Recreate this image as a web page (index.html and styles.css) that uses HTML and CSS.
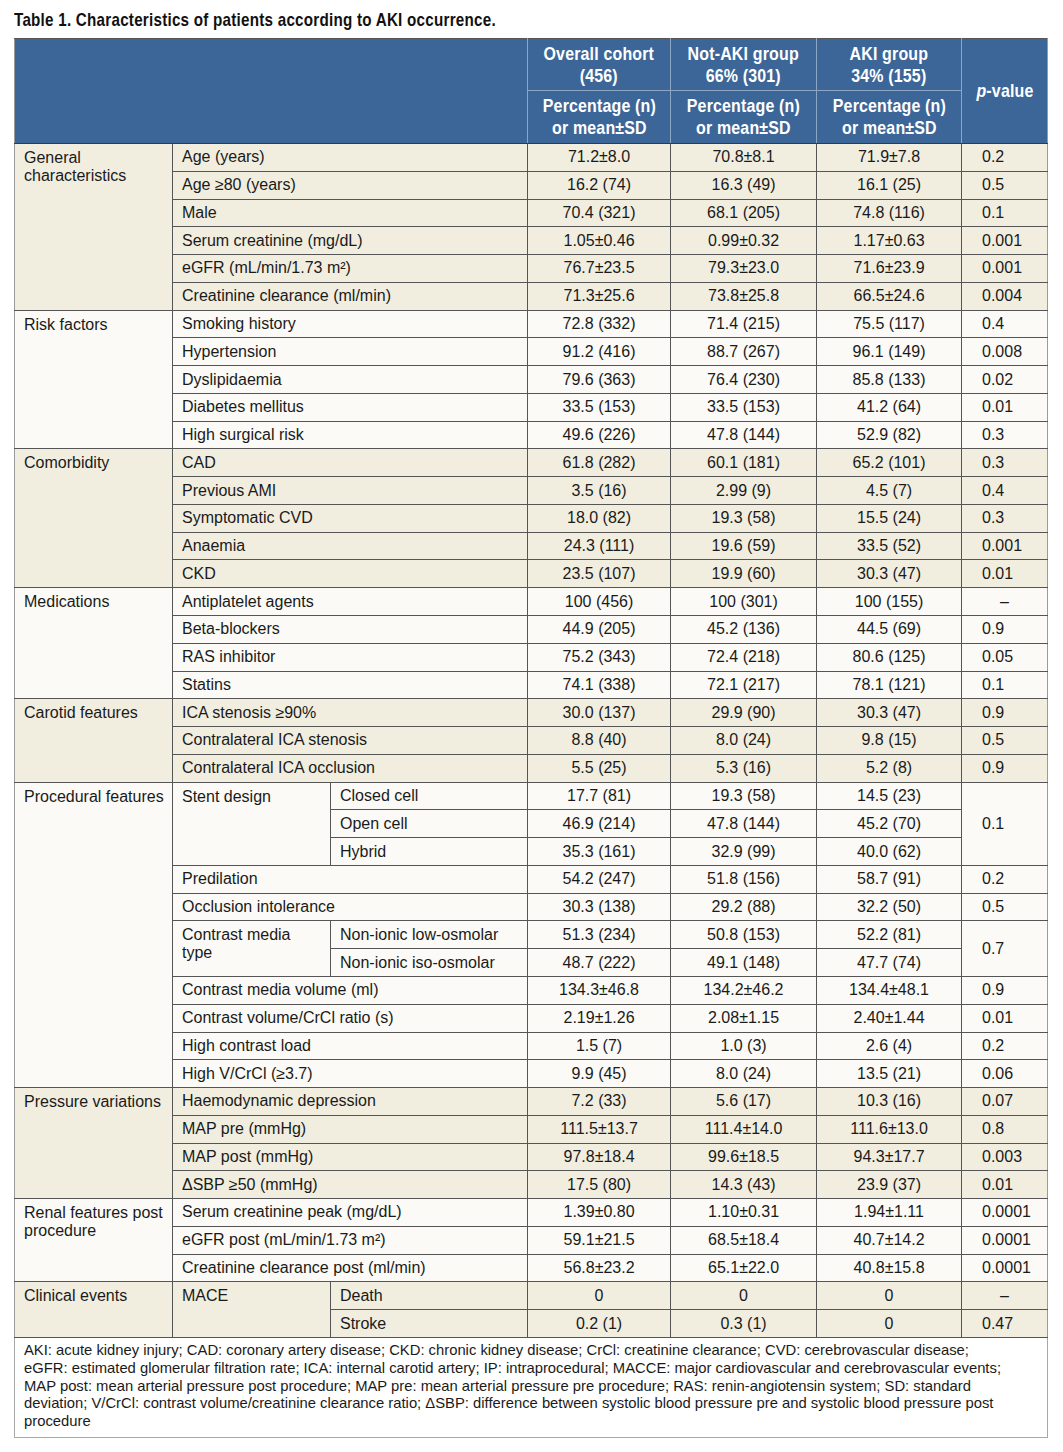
FILE: index.html
```html
<!DOCTYPE html>
<html lang="en">
<head>
<meta charset="utf-8">
<title>Table 1</title>
<link rel="stylesheet" href="styles.css">
</head>
<body>
<div class="page">
  <h1 class="caption"><span class="cond">Table 1. Characteristics of patients according to AKI occurrence.</span></h1>
  <table class="data">
    <colgroup>
      <col class="w-group">
      <col class="w-sub1">
      <col class="w-sub2">
      <col class="w-num1">
      <col class="w-num2">
      <col class="w-num3">
      <col class="w-p">
    </colgroup>
    <thead>
      <tr class="h1">
        <th colspan="3" rowspan="2" class="blank"></th>
        <th><span class="cond">Overall cohort<br>(456)</span></th>
        <th><span class="cond">Not-AKI group<br>66% (301)</span></th>
        <th><span class="cond">AKI group<br>34% (155)</span></th>
        <th rowspan="2" class="pv"><span class="cond"><i>p</i>-value</span></th>
      </tr>
      <tr class="h2">
        <th><span class="cond">Percentage (n)<br>or mean±SD</span></th>
        <th><span class="cond">Percentage (n)<br>or mean±SD</span></th>
        <th><span class="cond">Percentage (n)<br>or mean±SD</span></th>
      </tr>
    </thead>

    <tbody class="band">
      <tr><td rowspan="6" class="grp">General characteristics</td><td colspan="2" class="lbl">Age (years)</td><td class="num">71.2±8.0</td><td class="num">70.8±8.1</td><td class="num">71.9±7.8</td><td class="p">0.2</td></tr>
      <tr><td colspan="2" class="lbl">Age ≥80 (years)</td><td class="num">16.2 (74)</td><td class="num">16.3 (49)</td><td class="num">16.1 (25)</td><td class="p">0.5</td></tr>
      <tr><td colspan="2" class="lbl">Male</td><td class="num">70.4 (321)</td><td class="num">68.1 (205)</td><td class="num">74.8 (116)</td><td class="p">0.1</td></tr>
      <tr><td colspan="2" class="lbl">Serum creatinine (mg/dL)</td><td class="num">1.05±0.46</td><td class="num">0.99±0.32</td><td class="num">1.17±0.63</td><td class="p">0.001</td></tr>
      <tr><td colspan="2" class="lbl">eGFR (mL/min/1.73 m²)</td><td class="num">76.7±23.5</td><td class="num">79.3±23.0</td><td class="num">71.6±23.9</td><td class="p">0.001</td></tr>
      <tr><td colspan="2" class="lbl">Creatinine clearance (ml/min)</td><td class="num">71.3±25.6</td><td class="num">73.8±25.8</td><td class="num">66.5±24.6</td><td class="p">0.004</td></tr>
    </tbody>

    <tbody class="plain">
      <tr><td rowspan="5" class="grp">Risk factors</td><td colspan="2" class="lbl">Smoking history</td><td class="num">72.8 (332)</td><td class="num">71.4 (215)</td><td class="num">75.5 (117)</td><td class="p">0.4</td></tr>
      <tr><td colspan="2" class="lbl">Hypertension</td><td class="num">91.2 (416)</td><td class="num">88.7 (267)</td><td class="num">96.1 (149)</td><td class="p">0.008</td></tr>
      <tr><td colspan="2" class="lbl">Dyslipidaemia</td><td class="num">79.6 (363)</td><td class="num">76.4 (230)</td><td class="num">85.8 (133)</td><td class="p">0.02</td></tr>
      <tr><td colspan="2" class="lbl">Diabetes mellitus</td><td class="num">33.5 (153)</td><td class="num">33.5 (153)</td><td class="num">41.2 (64)</td><td class="p">0.01</td></tr>
      <tr><td colspan="2" class="lbl">High surgical risk</td><td class="num">49.6 (226)</td><td class="num">47.8 (144)</td><td class="num">52.9 (82)</td><td class="p">0.3</td></tr>
    </tbody>

    <tbody class="band">
      <tr><td rowspan="5" class="grp">Comorbidity</td><td colspan="2" class="lbl">CAD</td><td class="num">61.8 (282)</td><td class="num">60.1 (181)</td><td class="num">65.2 (101)</td><td class="p">0.3</td></tr>
      <tr><td colspan="2" class="lbl">Previous AMI</td><td class="num">3.5 (16)</td><td class="num">2.99 (9)</td><td class="num">4.5 (7)</td><td class="p">0.4</td></tr>
      <tr><td colspan="2" class="lbl">Symptomatic CVD</td><td class="num">18.0 (82)</td><td class="num">19.3 (58)</td><td class="num">15.5 (24)</td><td class="p">0.3</td></tr>
      <tr><td colspan="2" class="lbl">Anaemia</td><td class="num">24.3 (111)</td><td class="num">19.6 (59)</td><td class="num">33.5 (52)</td><td class="p">0.001</td></tr>
      <tr><td colspan="2" class="lbl">CKD</td><td class="num">23.5 (107)</td><td class="num">19.9 (60)</td><td class="num">30.3 (47)</td><td class="p">0.01</td></tr>
    </tbody>

    <tbody class="plain">
      <tr><td rowspan="4" class="grp">Medications</td><td colspan="2" class="lbl">Antiplatelet agents</td><td class="num">100 (456)</td><td class="num">100 (301)</td><td class="num">100 (155)</td><td class="p dash">–</td></tr>
      <tr><td colspan="2" class="lbl">Beta-blockers</td><td class="num">44.9 (205)</td><td class="num">45.2 (136)</td><td class="num">44.5 (69)</td><td class="p">0.9</td></tr>
      <tr><td colspan="2" class="lbl">RAS inhibitor</td><td class="num">75.2 (343)</td><td class="num">72.4 (218)</td><td class="num">80.6 (125)</td><td class="p">0.05</td></tr>
      <tr><td colspan="2" class="lbl">Statins</td><td class="num">74.1 (338)</td><td class="num">72.1 (217)</td><td class="num">78.1 (121)</td><td class="p">0.1</td></tr>
    </tbody>

    <tbody class="band">
      <tr><td rowspan="3" class="grp">Carotid features</td><td colspan="2" class="lbl">ICA stenosis ≥90%</td><td class="num">30.0 (137)</td><td class="num">29.9 (90)</td><td class="num">30.3 (47)</td><td class="p">0.9</td></tr>
      <tr><td colspan="2" class="lbl">Contralateral ICA stenosis</td><td class="num">8.8 (40)</td><td class="num">8.0 (24)</td><td class="num">9.8 (15)</td><td class="p">0.5</td></tr>
      <tr><td colspan="2" class="lbl">Contralateral ICA occlusion</td><td class="num">5.5 (25)</td><td class="num">5.3 (16)</td><td class="num">5.2 (8)</td><td class="p">0.9</td></tr>
    </tbody>

    <tbody class="plain">
      <tr><td rowspan="11" class="grp">Procedural features</td><td rowspan="3" class="lbl top">Stent design</td><td class="lbl">Closed cell</td><td class="num">17.7 (81)</td><td class="num">19.3 (58)</td><td class="num">14.5 (23)</td><td rowspan="3" class="p">0.1</td></tr>
      <tr><td class="lbl">Open cell</td><td class="num">46.9 (214)</td><td class="num">47.8 (144)</td><td class="num">45.2 (70)</td></tr>
      <tr><td class="lbl">Hybrid</td><td class="num">35.3 (161)</td><td class="num">32.9 (99)</td><td class="num">40.0 (62)</td></tr>
      <tr><td colspan="2" class="lbl">Predilation</td><td class="num">54.2 (247)</td><td class="num">51.8 (156)</td><td class="num">58.7 (91)</td><td class="p">0.2</td></tr>
      <tr><td colspan="2" class="lbl">Occlusion intolerance</td><td class="num">30.3 (138)</td><td class="num">29.2 (88)</td><td class="num">32.2 (50)</td><td class="p">0.5</td></tr>
      <tr><td rowspan="2" class="lbl top">Contrast media type</td><td class="lbl">Non-ionic low-osmolar</td><td class="num">51.3 (234)</td><td class="num">50.8 (153)</td><td class="num">52.2 (81)</td><td rowspan="2" class="p">0.7</td></tr>
      <tr><td class="lbl">Non-ionic iso-osmolar</td><td class="num">48.7 (222)</td><td class="num">49.1 (148)</td><td class="num">47.7 (74)</td></tr>
      <tr><td colspan="2" class="lbl">Contrast media volume (ml)</td><td class="num">134.3±46.8</td><td class="num">134.2±46.2</td><td class="num">134.4±48.1</td><td class="p">0.9</td></tr>
      <tr><td colspan="2" class="lbl">Contrast volume/CrCl ratio (s)</td><td class="num">2.19±1.26</td><td class="num">2.08±1.15</td><td class="num">2.40±1.44</td><td class="p">0.01</td></tr>
      <tr><td colspan="2" class="lbl">High contrast load</td><td class="num">1.5 (7)</td><td class="num">1.0 (3)</td><td class="num">2.6 (4)</td><td class="p">0.2</td></tr>
      <tr><td colspan="2" class="lbl">High V/CrCl (≥3.7)</td><td class="num">9.9 (45)</td><td class="num">8.0 (24)</td><td class="num">13.5 (21)</td><td class="p">0.06</td></tr>
    </tbody>

    <tbody class="band">
      <tr><td rowspan="4" class="grp">Pressure variations</td><td colspan="2" class="lbl">Haemodynamic depression</td><td class="num">7.2 (33)</td><td class="num">5.6 (17)</td><td class="num">10.3 (16)</td><td class="p">0.07</td></tr>
      <tr><td colspan="2" class="lbl">MAP pre (mmHg)</td><td class="num">111.5±13.7</td><td class="num">111.4±14.0</td><td class="num">111.6±13.0</td><td class="p">0.8</td></tr>
      <tr><td colspan="2" class="lbl">MAP post (mmHg)</td><td class="num">97.8±18.4</td><td class="num">99.6±18.5</td><td class="num">94.3±17.7</td><td class="p">0.003</td></tr>
      <tr><td colspan="2" class="lbl">ΔSBP ≥50 (mmHg)</td><td class="num">17.5 (80)</td><td class="num">14.3 (43)</td><td class="num">23.9 (37)</td><td class="p">0.01</td></tr>
    </tbody>

    <tbody class="plain">
      <tr><td rowspan="3" class="grp">Renal features post procedure</td><td colspan="2" class="lbl">Serum creatinine peak (mg/dL)</td><td class="num">1.39±0.80</td><td class="num">1.10±0.31</td><td class="num">1.94±1.11</td><td class="p">0.0001</td></tr>
      <tr><td colspan="2" class="lbl">eGFR post (mL/min/1.73 m²)</td><td class="num">59.1±21.5</td><td class="num">68.5±18.4</td><td class="num">40.7±14.2</td><td class="p">0.0001</td></tr>
      <tr><td colspan="2" class="lbl">Creatinine clearance post (ml/min)</td><td class="num">56.8±23.2</td><td class="num">65.1±22.0</td><td class="num">40.8±15.8</td><td class="p">0.0001</td></tr>
    </tbody>

    <tbody class="band">
      <tr><td rowspan="2" class="grp">Clinical events</td><td rowspan="2" class="lbl top">MACE</td><td class="lbl">Death</td><td class="num">0</td><td class="num">0</td><td class="num">0</td><td class="p dash">–</td></tr>
      <tr><td class="lbl">Stroke</td><td class="num">0.2 (1)</td><td class="num">0.3 (1)</td><td class="num">0</td><td class="p">0.47</td></tr>
    </tbody>

    <tfoot>
      <tr><td colspan="7" class="note">AKI: acute kidney injury; CAD: coronary artery disease; CKD: chronic kidney disease; CrCl: creatinine clearance; CVD: cerebrovascular disease;<br>eGFR: estimated glomerular filtration rate; ICA: internal carotid artery; IP: intraprocedural; MACCE: major cardiovascular and cerebrovascular events;<br>MAP post: mean arterial pressure post procedure; MAP pre: mean arterial pressure pre procedure; RAS: renin-angiotensin system; SD: standard<br>deviation; V/CrCl: contrast volume/creatinine clearance ratio; ΔSBP: difference between systolic blood pressure pre and systolic blood pressure post<br>procedure</td></tr>
    </tfoot>
  </table>
</div>
</body>
</html>
```

FILE: styles.css
```css
html, body {
  margin: 0;
  padding: 0;
  background: #ffffff;
}

.page {
  padding: 10px 0 0 14px;
  font-family: "Liberation Sans", Arial, sans-serif;
  color: #1a1a1a;
}

/* Condensed look: the reference uses a condensed bold face that is not installed,
   so Liberation Sans Bold is narrowed horizontally. */
.cond {
  display: inline-block;
  transform: scaleX(0.84);
  white-space: nowrap;
}

.caption {
  margin: 0 0 8px 0;
  font-family: "Liberation Sans", Arial, sans-serif;
  font-weight: bold;
  font-size: 19px;
  line-height: 20px;
  color: #111;
}

.caption .cond {
  transform: scaleX(0.8);
  transform-origin: left center;
  letter-spacing: 0.3px;
}

.data {
  width: 1033px;
  table-layout: fixed;
  border-collapse: collapse;
  border: 1px solid #9a9a9a;
  border-top-color: #555;
  font-size: 16px;
}

.w-group { width: 158px; }
.w-sub1 { width: 158px; }
.w-sub2 { width: 197px; }
.w-num1 { width: 143px; }
.w-num2 { width: 146px; }
.w-num3 { width: 145px; }
.w-p { width: 86px; }

thead th {
  background: #3c6698;
  color: #ffffff;
  font-family: "Liberation Sans", Arial, sans-serif;
  font-weight: bold;
  font-size: 19px;
  line-height: 22px;
  text-align: center;
  vertical-align: middle;
  padding: 0;
  border: 1px solid #8ea6c6;
}

thead th .cond {
  transform-origin: center center;
  letter-spacing: 0.2px;
}

thead tr.h1 { height: 52px; }
thead tr.h2 { height: 53px; }
thead tr.h2 th { border-bottom: 1px solid #3a3a3a; }
thead th.blank { border-left-color: #9a9a9a; border-bottom: 1px solid #3a3a3a; }
thead th.pv { border-bottom: 1px solid #3a3a3a; border-right-color: #9a9a9a; }
thead tr.h1 th { border-top-color: #555; }

tbody tr { height: 27.77px; }

tbody td {
  border: 1px solid #555;
  padding: 0 0 0 9px;
  line-height: 18px;
  vertical-align: middle;
  white-space: nowrap;
}

tbody.band td { background: #f1eee0; }
tbody.plain td { background: #fbfaf6; }

td.grp {
  vertical-align: top;
  white-space: normal;
  padding-top: 5px;
  padding-right: 6px;
  border-left-color: #9a9a9a;
}

td.lbl.top {
  vertical-align: top;
  white-space: normal;
  padding-top: 5px;
  padding-right: 6px;
}

td.num {
  text-align: center;
  padding: 0;
}

td.p {
  padding-left: 20px;
  border-right-color: #9a9a9a;
}

td.p.dash {
  padding-left: 0;
  text-align: center;
}

tfoot td.note {
  background: #ffffff;
  border: 1px solid #a8a8a8;
  padding: 4px 9px 6px 9px;
  font-size: 14.8px;
  line-height: 17.8px;
  color: #1a1a1a;
}
```
